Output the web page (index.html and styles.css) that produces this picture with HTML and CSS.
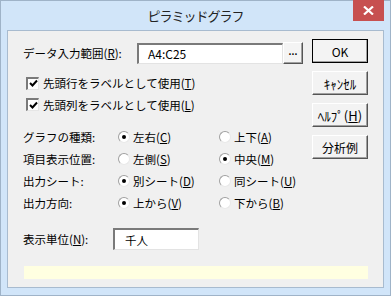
FILE: index.html
```html
<!DOCTYPE html>
<html lang="ja">
<head>
    <meta charset="UTF-8">
    <title>ピラミッドグラフ</title>
    <link rel="stylesheet" href="styles.css">
</head>
<body>
    <div class="window">
        <div class="titlebar">
            <span class="title">ピラミッドグラフ</span>
            <span class="close">
                <svg width="11" height="9" viewBox="0 0 11 9"><path d="M1 0.5 L10 8.5 M10 0.5 L1 8.5" stroke="#fff" stroke-width="2.2"/></svg>
            </span>
        </div>
        <div class="client">
            <div class="top">
                <div class="form">
                    <div class="range-row">
                        <span class="range-label">データ入力範囲(<u>R</u>):</span>
                        <span class="textbox range-box">A4:C25</span>
                        <span class="ref-btn">...</span>
                    </div>
                    <div class="check-row first">
                        <span class="checkbox">
                            <svg width="9" height="9" viewBox="0 0 9 9"><path d="M1 4 L3.5 6.5 L8 1.5" fill="none" stroke="#000" stroke-width="2"/></svg>
                        </span>
                        先頭行をラベルとして使用(<u>T</u>)
                    </div>
                    <div class="check-row">
                        <span class="checkbox">
                            <svg width="9" height="9" viewBox="0 0 9 9"><path d="M1 4 L3.5 6.5 L8 1.5" fill="none" stroke="#000" stroke-width="2"/></svg>
                        </span>
                        先頭列をラベルとして使用(<u>L</u>)
                    </div>
                    <div class="options">
                        <span class="opt-label">グラフの種類:</span>
                        <span class="opt"><span class="radio on"></span>左右(<u>C</u>)</span>
                        <span class="opt"><span class="radio"></span>上下(<u>A</u>)</span>

                        <span class="opt-label">項目表示位置:</span>
                        <span class="opt"><span class="radio"></span>左側(<u>S</u>)</span>
                        <span class="opt"><span class="radio on"></span>中央(<u>M</u>)</span>

                        <span class="opt-label">出力シート:</span>
                        <span class="opt"><span class="radio on"></span>別シート(<u>D</u>)</span>
                        <span class="opt"><span class="radio"></span>同シート(<u>U</u>)</span>

                        <span class="opt-label">出力方向:</span>
                        <span class="opt"><span class="radio on"></span>上から(<u>V</u>)</span>
                        <span class="opt"><span class="radio"></span>下から(<u>B</u>)</span>
                    </div>
                    <div class="unit-row">
                        <span class="unit-label">表示単位(<u>N</u>):</span>
                        <span class="textbox unit-box">千人</span>
                    </div>
                </div>
                <div class="buttons">
                    <span class="btn default">OK</span>
                    <span class="btn kana">ｷｬﾝｾﾙ</span>
                    <span class="btn kana">ﾍﾙﾌﾟ(<u>H</u>)</span>
                    <span class="btn">分析例</span>
                </div>
            </div>
            <div class="status"></div>
        </div>
    </div>
</body>
</html>
```

FILE: styles.css
```css
body {
    margin: 0;
    font-family: "Noto Sans CJK JP", "Noto Sans", sans-serif;
    color: #000;
}

.window {
    width: 389px;
    height: 294px;
    border: 1px solid #9fb3c8;
    background-color: #d1e5f9;
}

.titlebar {
    height: 29px;
    display: grid;
    grid-template-columns: 1fr auto 1fr;
}

.title {
    grid-column: 2;
    font-size: 13px;
    letter-spacing: -1px;
    line-height: 29px;
    color: #222;
}

.close {
    grid-column: 3;
    justify-self: end;
    align-self: start;
    width: 31px;
    height: 21px;
    margin-top: -1px;
    margin-right: 6px;
    background-color: #c75050;
    display: flex;
    align-items: center;
    justify-content: center;
}

.client {
    margin: 0 6px;
    border: 1px solid #a8bbcf;
    background-color: #f0f0f0;
    padding: 8px 15px;
    height: 240px;
    font-size: 11.5px;
}

.top {
    display: flex;
    gap: 9px;
}

.form {
    width: 280px;
}

.range-row {
    margin-top: 3px;
    height: 22px;
    display: flex;
    align-items: center;
}

.range-label {
    width: 114px;
}

.textbox {
    box-sizing: border-box;
    background-color: #fff;
    border-top: 2px solid #7a7a7a;
    border-left: 2px solid #7a7a7a;
    border-right: 1px solid #e3e3e3;
    border-bottom: 1px solid #e3e3e3;
    display: flex;
    align-items: center;
}

.range-box {
    width: 146px;
    height: 21px;
    padding-left: 9px;
    font-size: 12px;
}

.ref-btn {
    box-sizing: border-box;
    width: 20px;
    height: 22px;
    background-color: #f4f4f4;
    border-top: 1px solid #fff;
    border-left: 1px solid #fff;
    border-right: 1px solid #555;
    border-bottom: 1px solid #555;
    box-shadow: inset -1px -1px 0 #a0a0a0;
    font-size: 9px;
    font-weight: bold;
    text-align: center;
    line-height: 18px;
}

.check-row {
    height: 21px;
    display: flex;
    align-items: center;
}

.check-row.first {
    margin-top: 8px;
    height: 22px;
}

.checkbox {
    box-sizing: border-box;
    width: 13px;
    height: 13px;
    margin: 0 4px 0 3px;
    background-color: #fff;
    border-top: 2px solid #7a7a7a;
    border-left: 2px solid #7a7a7a;
    border-right: 1px solid #e6e6e6;
    border-bottom: 1px solid #e6e6e6;
    display: flex;
    align-items: center;
    justify-content: center;
}

.options {
    margin-top: 11px;
    display: grid;
    grid-template-columns: 95px 101px auto;
    grid-auto-rows: 22px;
    align-items: center;
}

.opt {
    display: flex;
    align-items: center;
}

.radio {
    box-sizing: border-box;
    width: 12px;
    height: 12px;
    margin-right: 3px;
    border-radius: 50%;
    background-color: #fff;
    border: 1px solid #a0a0a0;
    border-bottom-color: #e8e8e8;
    border-right-color: #e8e8e8;
    display: flex;
    align-items: center;
    justify-content: center;
}

.radio.on::after {
    content: "";
    width: 4px;
    height: 4px;
    border-radius: 50%;
    background-color: #000;
}

.unit-row {
    margin-top: 14px;
    height: 22px;
    display: flex;
    align-items: center;
}

.unit-label {
    width: 90px;
}

.unit-box {
    width: 86px;
    height: 22px;
    padding-left: 10px;
}

.buttons {
    width: 56px;
    display: flex;
    flex-direction: column;
    gap: 8px;
}

.btn {
    box-sizing: border-box;
    height: 24px;
    background-color: #f3f3f3;
    border-top: 1px solid #fff;
    border-left: 1px solid #fff;
    border-right: 1px solid #555;
    border-bottom: 1px solid #555;
    box-shadow: inset -1px -1px 0 #a0a0a0;
    display: flex;
    align-items: center;
    justify-content: center;
    font-size: 12px;
}

.btn.kana {
    font-size: 13px;
}

.btn.default {
    outline: 1px solid #000;
    outline-offset: -1px;
    border-top-color: #000;
    border-left-color: #000;
}

.status {
    margin-left: 1px;
    margin-top: 16px;
    width: 344px;
    height: 13px;
    background-color: #ffffe1;
}
```
